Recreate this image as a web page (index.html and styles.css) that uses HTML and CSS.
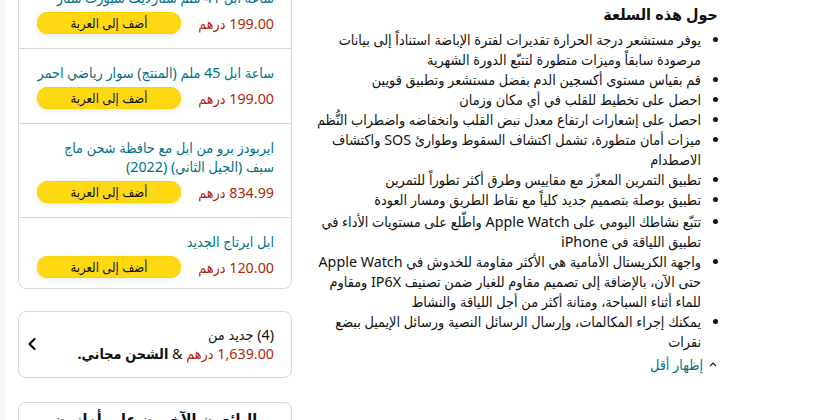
FILE: index.html
```html
<!DOCTYPE html>
<html lang="ar" dir="rtl">
<head>
  <meta charset="UTF-8">
  <meta name="viewport" content="width=device-width, initial-scale=1.0">
  <title>ساعة ابل</title>
  <link rel="stylesheet" href="styles.css">
</head>
<body>

<div class="page">

  <section class="about">
    <h2 class="about-title">حول هذه السلعة</h2>
    <ul class="about-list">
      <li>يوفر مستشعر درجة الحرارة تقديرات لفترة الإباضة استناداً إلى بيانات مرصودة سابقاً وميزات متطورة لتتبّع الدورة الشهرية</li>
      <li>قم بقياس مستوى أكسجين الدم بفضل مستشعر وتطبيق قويين</li>
      <li>احصل على تخطيط للقلب في أي مكان وزمان</li>
      <li>احصل على إشعارات ارتفاع معدل نبض القلب وانخفاضه واضطراب النُّظم</li>
      <li>ميزات أمان متطورة، تشمل اكتشاف السقوط وطوارئ SOS واكتشاف الاصطدام</li>
      <li>تطبيق التمرين المعزّز مع مقاييس وطرق أكثر تطوراً للتمرين</li>
      <li>تطبيق بوصلة بتصميم جديد كلياً مع نقاط الطريق ومسار العودة</li>
      <li class="gap-top">تتبّع نشاطك اليومي على Apple Watch واطّلع على مستويات الأداء في تطبيق اللياقة في iPhone</li>
      <li>واجهة الكريستال الأمامية هي الأكثر مقاومة للخدوش في Apple Watch حتى الآن، بالإضافة إلى تصميم مقاوم للغبار ضمن تصنيف IP6X ومقاوم للماء أثناء السباحة، ومتانة أكثر من أجل اللياقة والنشاط</li>
      <li>يمكنك إجراء المكالمات، وإرسال الرسائل النصية ورسائل الإيميل ببضع نقرات</li>
    </ul>
    <a href="#" class="show-less">
      <svg class="caret" width="8" height="5" viewBox="0 0 8 5">
        <path d="M1 4.2 L4 1.2 L7 4.2" fill="none" stroke="#0f1111" stroke-width="1.2"/>
      </svg>
      إظهار أقل
    </a>
  </section>

  <aside class="side">

    <div class="card offers">
      <div class="offer">
        <a href="#" class="offer-title">ساعة ابل 41 ملم ستارلايت سبورت ستار</a>
        <div class="offer-buy">
          <span class="price">199.00 درهم</span>
          <button type="button" class="cart-btn">أضف إلى العربة</button>
        </div>
      </div>
      <div class="offer">
        <a href="#" class="offer-title">ساعة ابل 45 ملم (المنتج) سوار رياضي احمر</a>
        <div class="offer-buy">
          <span class="price">199.00 درهم</span>
          <button type="button" class="cart-btn">أضف إلى العربة</button>
        </div>
      </div>
      <div class="offer">
        <a href="#" class="offer-title">ايربودز برو من ابل مع حافظة شحن ماج سيف (الجيل الثاني) (2022)</a>
        <div class="offer-buy">
          <span class="price">834.99 درهم</span>
          <button type="button" class="cart-btn">أضف إلى العربة</button>
        </div>
      </div>
      <div class="offer">
        <a href="#" class="offer-title">ابل ايرتاج الجديد</a>
        <div class="offer-buy">
          <span class="price">120.00 درهم</span>
          <button type="button" class="cart-btn">أضف إلى العربة</button>
        </div>
      </div>
    </div>

    <div class="card new-from">
      <div class="new-from-text">
        <div>(4) جديد من</div>
        <div><span class="price">1,639.00 درهم</span> &amp; <b>الشحن مجاني.</b></div>
      </div>
      <svg class="chevron" width="10" height="14" viewBox="0 0 10 14">
        <path d="M7.5 2 L2.5 7 L7.5 12" fill="none" stroke="#0f1111" stroke-width="2.2" stroke-linecap="round" stroke-linejoin="round"/>
      </svg>
    </div>

    <div class="card other-sellers">
      <h3 class="other-title">البائعون الآخرون على أمازون</h3>
    </div>

  </aside>
</div>

</body>
</html>
```

FILE: styles.css
```css
body {
  margin: 0;
  font-family: "Noto Sans", "DejaVu Sans Condensed", "DejaVu Sans", sans-serif;
  font-size: 14.3px;
  color: #0f1111;
  background-color: #fff;
  box-shadow: inset 6px 0 0 #f7f7f7;
  min-height: 420px;
  overflow: hidden;
}

.page {
  display: flex;
  align-items: flex-start;
  gap: 20px;
  padding: 0 114px 0 18px;
}

/* about this item */
.about {
  width: 406px;
  padding-top: 4px;
}

.about-title {
  margin: 0 0 6px;
  font-size: 16px;
  line-height: 20px;
  font-weight: 700;
}

.about-list {
  margin: 0;
  padding: 0 17px 0 0;
  line-height: 20px;
}

.about-list li {
  margin: 0;
}

.about-list .gap-top {
  margin-top: 2px;
}

.show-less {
  display: inline-flex;
  align-items: center;
  gap: 6px;
  margin-top: 1px;
  color: #007185;
  text-decoration: none;
  line-height: 20px;
}

.show-less .caret {
  display: block;
  margin-right: 1px;
}

/* side column */
.side {
  width: 274px;
  margin-top: -27px;
  display: flex;
  flex-direction: column;
  gap: 22px;
}

.card {
  border: 1px solid #d5d9d9;
  border-radius: 8px;
  background-color: #fff;
}

.offer {
  padding: 14px 17px 14px 18px;
  border-top: 1px solid #d5d9d9;
}

.offer:first-child {
  border-top: none;
}

.offer:last-child {
  padding-bottom: 10px;
}

.offer-title {
  display: block;
  color: #007185;
  text-decoration: none;
  line-height: 19px;
}

.offer-buy {
  display: flex;
  justify-content: space-between;
  align-items: center;
  margin-top: 5px;
}

.price {
  color: #b12704;
}

.cart-btn {
  width: 144px;
  height: 22px;
  padding: 0;
  font-family: inherit;
  font-size: 13px;
  color: #0f1111;
  background-color: #ffd814;
  border: 1px solid #fcd200;
  border-radius: 10px;
  box-shadow: 0 2px 5px rgba(213, 217, 217, 0.5);
  cursor: pointer;
}

.new-from {
  display: flex;
  justify-content: space-between;
  align-items: center;
  padding: 13px 17px 14px 8px;
  line-height: 19px;
}

.new-from b {
  font-weight: 700;
}

.chevron {
  display: block;
}

.other-sellers {
  margin-top: 2px;
  padding: 6px 18px;
}

.other-title {
  margin: 0;
  text-align: center;
  font-size: 16px;
  line-height: 20px;
  font-weight: 700;
}
```
